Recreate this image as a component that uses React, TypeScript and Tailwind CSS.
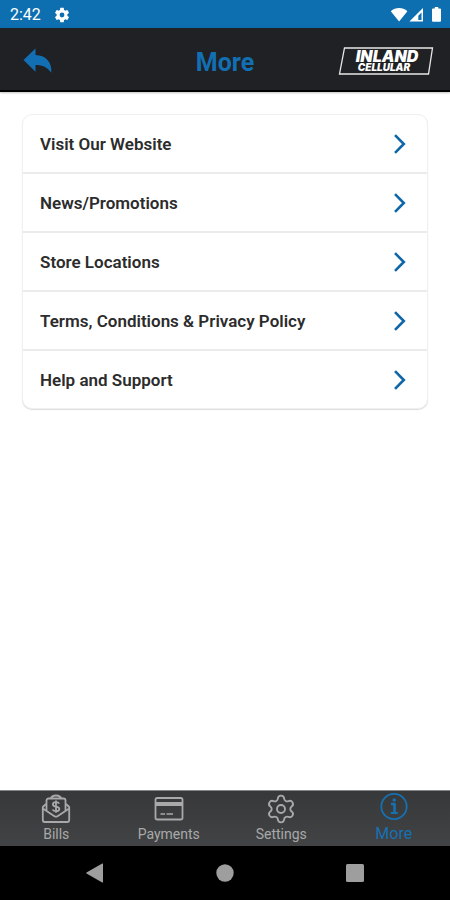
import type { ReactNode } from 'react'
import { Settings } from 'lucide-react'

const menuItems = [
  'Visit Our Website',
  'News/Promotions',
  'Store Locations',
  'Terms, Conditions & Privacy Policy',
  'Help and Support',
]

function StatusBar() {
  return (
    <div className="flex h-7 items-center justify-between bg-[#0d6fb0] pt-[2px] pr-2 pl-[10px] text-white">
      <div className="flex items-center gap-3">
        <span className="text-base leading-5">2:42</span>
        <svg aria-hidden="true" width="18" height="18" viewBox="0 0 24 24" fill="currentColor">
          <path d="M19.14 12.94c.04-.3.06-.61.06-.94 0-.32-.02-.64-.07-.94l2.03-1.58a.49.49 0 0 0 .12-.61l-1.92-3.32a.49.49 0 0 0-.59-.22l-2.39.96c-.5-.38-1.03-.7-1.62-.94l-.36-2.54a.48.48 0 0 0-.48-.41h-3.84c-.24 0-.43.17-.47.41l-.36 2.54c-.59.24-1.13.57-1.62.94l-2.39-.96a.48.48 0 0 0-.59.22L2.74 8.87c-.12.21-.08.47.12.61l2.03 1.58c-.05.3-.09.63-.09.94s.02.64.07.94l-2.03 1.58a.49.49 0 0 0-.12.61l1.92 3.32c.12.22.37.29.59.22l2.39-.96c.5.38 1.03.7 1.62.94l.36 2.54c.05.24.24.41.48.41h3.84c.24 0 .44-.17.47-.41l.36-2.54c.59-.24 1.13-.56 1.62-.94l2.39.96c.22.08.47 0 .59-.22l1.92-3.32a.48.48 0 0 0-.12-.61l-2.01-1.58zM12 15.2a3.200 3.200 0 1 1 0-6.400 3.200 3.200 0 0 1 0 6.400z" />
        </svg>
      </div>
      <svg aria-hidden="true" width="52" height="18" viewBox="0 0 52 18" fill="currentColor">
        <path d="M.8 5.2C5.4 1 12.800 1 17.400 5.200L9.100 15.600z" />
        <path fillRule="evenodd" d="M33 2v13.600H19.400zM31.500 6.500v7.600h-3.200V9.700z" />
        <path d="M43 2.600h1.800V1h3.400v1.600H50a1 1 0 0 1 1 1v11.200a1 1 0 0 1-1 1h-7a1 1 0 0 1-1-1V3.600a1 1 0 0 1 1-1z" />
      </svg>
    </div>
  )
}

function Logo() {
  return (
    <svg role="img" aria-label="Inland Cellular" width="96" height="30" viewBox="0 0 96 30">
      <path d="M6.500 2H94.500L90.500 28H1.500z" fill="none" stroke="#e8e8e8" strokeWidth="1.300" />
      <text
        fill="#fff"
        fontWeight="900"
        fontStyle="italic"
        textAnchor="middle"
        className="font-['Inter',sans-serif]"
      >
        <tspan x="49" y="16" fontSize="16">INLAND</tspan>
        <tspan x="46" y="25" fontSize="10">CELLULAR</tspan>
      </text>
    </svg>
  )
}

function Header() {
  return (
    <header className="grid h-16 grid-cols-3 items-center border-b-2 border-black bg-[#202124] px-4 pt-1 shadow-[0_1px_2px_rgba(0,0,0,0.25)]">
      <button type="button" aria-label="Back" className="justify-self-start pl-[7px] text-[#126fb3]">
        <svg aria-hidden="true" width="30" height="26" viewBox="0 0 30 26" fill="currentColor">
          <path d="M.5 12 12.500.5v6.500C22.500 7.200 29.300 14 28.300 24.800 24.600 19.400 19.500 17 12.500 17v6.800z" />
        </svg>
      </button>
      <h1 className="pt-1 text-center text-[25px] leading-8 font-bold text-[#126fb3]">More</h1>
      <div className="justify-self-end">
        <Logo />
      </div>
    </header>
  )
}

function MenuList() {
  return (
    <ul className="divide-y-2 divide-[#ebebeb] overflow-hidden rounded-[10px] border border-[#f0f0f0] bg-white shadow-[0_1px_1px_rgba(0,0,0,0.14)]">
      {menuItems.map((label) => (
        <li key={label}>
          <button type="button" className="flex h-[57px] w-full items-center justify-between pr-5 pl-[17px] text-left">
            <span className="text-[17px] leading-6 font-semibold text-[#2c2c2c]">{label}</span>
            <svg
              aria-hidden="true"
              width="16"
              height="22"
              viewBox="0 0 16 22"
              fill="none"
              stroke="#0e66a8"
              strokeWidth="2.600"
            >
              <path d="m4 2.200 8.800 8.800L4 19.800" />
            </svg>
          </button>
        </li>
      ))}
    </ul>
  )
}

interface TabProps {
  label: string
  active?: boolean
  children: ReactNode
}

function Tab({ label, active, children }: TabProps) {
  return (
    <button
      type="button"
      aria-current={active ? 'page' : undefined}
      className={
        active
          ? 'flex h-full flex-col items-center justify-between pb-[2px] text-base leading-5 text-[#1671b2]'
          : 'flex h-full flex-col items-center justify-between pt-[3px] pb-[2px] text-sm leading-5 text-[#a9a9a9]'
      }
    >
      <svg
        aria-hidden="true"
        width="30"
        height="30"
        viewBox="0 0 30 30"
        fill="none"
        stroke="currentColor"
        strokeWidth="1.800"
        strokeLinejoin="round"
      >
        {children}
      </svg>
      {label}
    </button>
  )
}

function TabBar() {
  return (
    <nav
      aria-label="Main"
      className="grid h-14 grid-cols-4 border-t border-[#85878a] bg-linear-to-b from-[#36383a] to-[#414345]"
    >
      <Tab label="Bills">
        <path d="M5 10 1.800 13v13a2 2 0 0 0 2 2h22.400a2 2 0 0 0 2-2V13L25 10M1.800 14.500 13.500 22.200a2.700 2.700 0 0 0 3 0L28.200 14.500" />
        <path d="M5.500 16.500V6.500a2 2 0 0 1 2-2h15a2 2 0 0 1 2 2v10M9.800 4.500C11 .5 19 .5 20.200 4.500" />
        <path d="M18.200 9.600c-.6-1-1.800-1.400-3.200-1.400-1.800 0-3.100.8-3.100 2.200 0 3.200 6.400 1.500 6.400 4.600 0 1.500-1.400 2.200-3.300 2.200-1.600 0-2.900-.5-3.400-1.700M15 6.600v12.200" />
      </Tab>
      <Tab label="Payments">
        <rect x="1.500" y="4" width="27" height="21.500" rx="1.800" />
        <path d="M2 10h26" strokeWidth="4" />
        <path d="M6.500 20h4.500M12.500 20h6.500" strokeWidth="1.600" />
      </Tab>
      <Tab label="Settings">
        <Settings x={-1} y={-1} size={32} strokeWidth={1.4} />
      </Tab>
      <Tab label="More" active>
        <circle cx="15" cy="15.500" r="12.700" />
        <path d="M12 13h3.500v8.500" strokeWidth="2.600" />
        <path d="M11.800 22h7" strokeWidth="2" />
        <circle cx="15.200" cy="9" r="1.800" fill="currentColor" stroke="none" />
      </Tab>
    </nav>
  )
}

function SystemNav() {
  return (
    <div className="flex h-[54px] items-center justify-between bg-black px-[85px] text-[#9e9e9e]">
      <button type="button" aria-label="System back">
        <svg aria-hidden="true" width="20" height="20" viewBox="0 0 20 20" fill="currentColor">
          <path d="M18 1v18a.5.5 0 0 1-.8.400L1.500 10.500a.6.600 0 0 1 0-1L17.200.600A.5.500 0 0 1 18 1z" />
        </svg>
      </button>
      <button type="button" aria-label="Home">
        <svg aria-hidden="true" width="20" height="20" viewBox="0 0 20 20" fill="currentColor">
          <circle cx="10" cy="10" r="8.700" />
        </svg>
      </button>
      <button type="button" aria-label="Recent apps">
        <svg aria-hidden="true" width="20" height="20" viewBox="0 0 20 20" fill="currentColor">
          <rect x="1" y="1" width="18" height="18" rx="1.500" />
        </svg>
      </button>
    </div>
  )
}

export default function App() {
  return (
    <div className="flex min-h-screen flex-col bg-white font-['Roboto',sans-serif]">
      <StatusBar />
      <Header />
      <main className="flex-1 px-[22px] pt-[22px]">
        <MenuList />
      </main>
      <TabBar />
      <SystemNav />
    </div>
  )
}
